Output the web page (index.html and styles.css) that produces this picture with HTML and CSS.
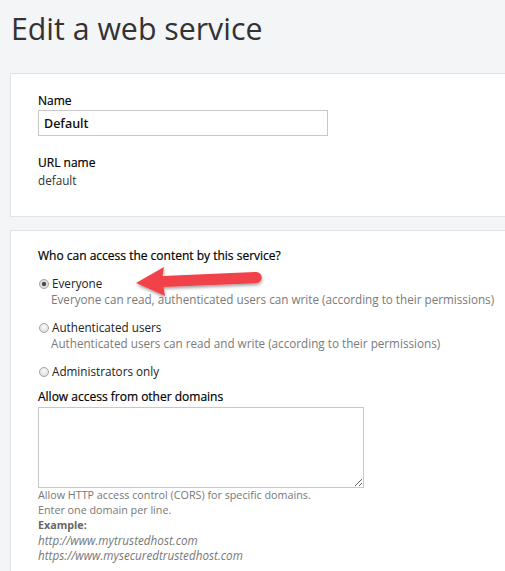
FILE: index.html
```html
<!DOCTYPE html>
<html>
<head>
<meta charset="utf-8">
<link rel="stylesheet" href="styles.css">
</head>
<body>
<h1 class="title">Edit a web service</h1>
<section class="card card-first">
  <div class="field">
    <label class="label" for="name">Name</label>
    <input class="text-input" id="name" type="text" value="Default">
  </div>
  <div class="field field-url">
    <div class="label">URL name</div>
    <div class="value">default</div>
  </div>
</section>
<section class="card card-second">
  <div class="label">Who can access the content by this service?</div>
  <div class="options">
    <div class="option">
      <label class="radio-row"><input class="radio" type="radio" name="access" checked> <span>Everyone</span></label>
      <div class="option-desc">Everyone can read, authenticated users can write (according to their permissions)</div>
    </div>
    <div class="option">
      <label class="radio-row"><input class="radio" type="radio" name="access"> <span>Authenticated users</span></label>
      <div class="option-desc">Authenticated users can read and write (according to their permissions)</div>
    </div>
    <div class="option">
      <label class="radio-row"><input class="radio" type="radio" name="access"> <span>Administrators only</span></label>
    </div>
  </div>
  <label class="label label-domains" for="domains">Allow access from other domains</label>
  <textarea class="textarea" id="domains"></textarea>
  <div class="help">
    <div>Allow HTTP access control (CORS) for specific domains.</div>
    <div>Enter one domain per line.</div>
    <div class="help-strong">Example:</div>
    <div class="help-em">http://www.mytrustedhost.com</div>
    <div class="help-em">https://www.mysecuredtrustedhost.com</div>
  </div>
  <svg class="arrow" width="150" height="44" viewBox="0 0 150 44">
    <defs>
      <filter id="sh" x="-20%" y="-40%" width="140%" height="200%">
        <feDropShadow dx="0.5" dy="2" stdDeviation="1.6" flood-color="#000" flood-opacity="0.35"/>
      </filter>
    </defs>
    <path filter="url(#sh)" d="M16 23 L44 7 L42.5 16 L135 12 A5.6 5.6 0 0 1 137 23.2 L43.5 27 L45 36 Z" fill="#f2434a"/>
  </svg>
</section>
</body>
</html>
```
FILE: styles.css
```css
html, body {
  margin: 0;
  padding: 0;
}
body {
  background: #f4f5f7;
  font-family: "Open Sans", "Liberation Sans", sans-serif;
  color: #222;
  overflow: hidden;
  width: 505px;
  height: 571px;
}
.title {
  margin: 0;
  padding: 8px 0 0 11px;
  font-size: 30.3px;
  font-weight: 400;
  line-height: 42px;
  color: #333;
  height: 65px;
}
.card {
  position: relative;
  background: #fff;
  border: 1px solid #e2e3e5;
  border-right: none;
  margin-left: 10px;
  padding-left: 27px;
}
.card-first {
  padding-top: 19px;
  padding-bottom: 27px;
  margin-bottom: 13px;
}
.card-second {
  padding-top: 17px;
  padding-bottom: 20px;
}
.label {
  display: block;
  font-size: 12px;
  font-weight: 400;
  line-height: 16px;
  color: #000;
  -webkit-text-stroke: 0.2px #000;
}
.text-input {
  display: block;
  box-sizing: border-box;
  width: 290px;
  height: 26px;
  margin: 1px 0 0;
  padding: 0 5px;
  border: 1px solid #c8c8c8;
  border-radius: 0;
  font-family: "Open Sans", "Liberation Sans", sans-serif;
  font-size: 12.5px;
  font-weight: 600;
  color: #111;
  background: #fff;
  outline: none;
}
.field-url {
  margin-top: 19px;
}
.value {
  font-size: 11.7px;
  line-height: 18px;
  color: #333;
}
.options {
  margin-top: 11px;
}
.option {
  margin-bottom: 11px;
}
.option:last-child {
  margin-bottom: 10px;
}
.radio-row {
  display: flex;
  align-items: center;
  gap: 3px;
  font-size: 11.7px;
  line-height: 16px;
  color: #222;
}
.radio {
  -webkit-appearance: none;
  appearance: none;
  box-sizing: border-box;
  margin: 0 0 0 1px;
  width: 10px;
  height: 10px;
  border-radius: 50%;
  border: 1px solid #a3a3a3;
  background: radial-gradient(circle at 50% 35%, #fbfbfb 0%, #e4e4e4 65%, #cfcfcf 100%);
  position: relative;
  top: 0.5px;
}
.radio:checked {
  background: radial-gradient(circle, #3d3d3d 0, #555 1.9px, #e6e6e6 2.6px, #d6d6d6 100%);
}
.option-desc {
  padding-left: 13px;
  font-size: 11.7px;
  line-height: 17px;
  color: #7a7a7a;
  white-space: nowrap;
}
.label-domains {
  margin-bottom: 2px;
}
.textarea {
  display: block;
  box-sizing: border-box;
  width: 326px;
  height: 81px;
  margin: 0;
  border: 1px solid #c8c8c8;
  border-radius: 0;
  resize: both;
  background: #fff;
  outline: none;
}
.help {
  font-size: 10.75px;
  line-height: 15px;
  color: #777;
}
.help-strong {
  font-weight: 700;
  color: #666;
}
.help-em {
  font-style: italic;
  font-size: 11.7px;
  color: #777;
}
.arrow {
  position: absolute;
  left: 109px;
  top: 29px;
}
```
